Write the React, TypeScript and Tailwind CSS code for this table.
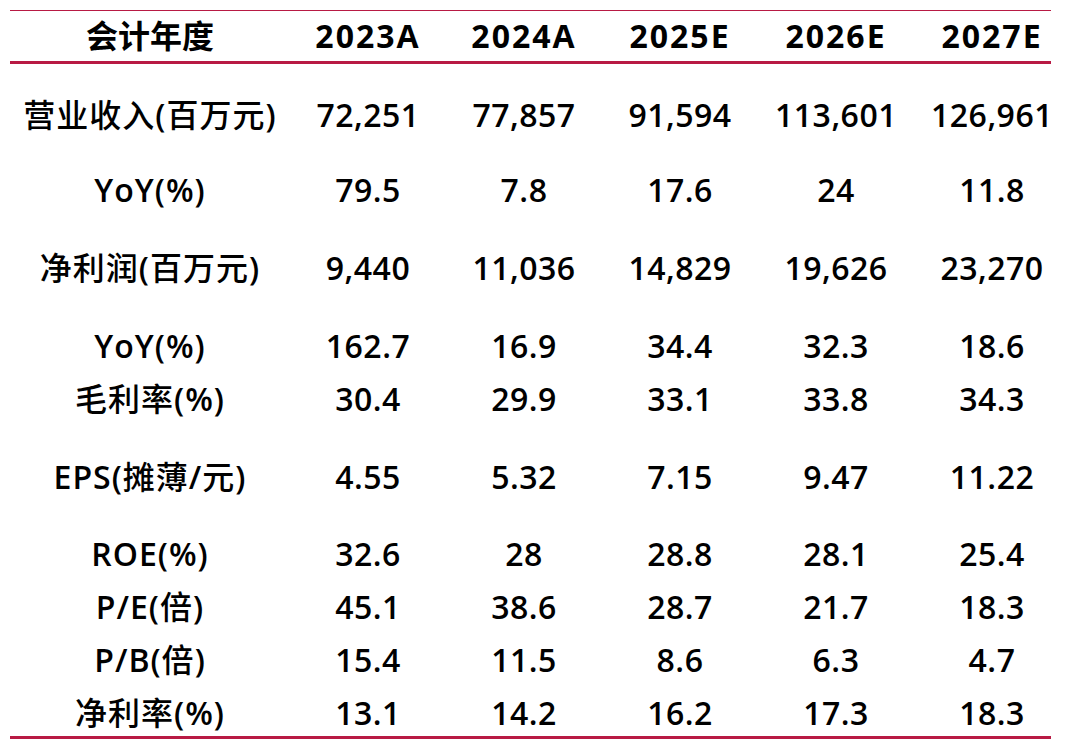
import React from "react";

const years = ["2023A", "2024A", "2025E", "2026E", "2027E"];

const rows: { label: string; values: string[]; gap: string }[] = [
  { label: "营业收入(百万元)", values: ["72,251", "77,857", "91,594", "113,601", "126,961"], gap: "mt-[24px]" },
  { label: "YoY(%)", values: ["79.5", "7.8", "17.6", "24", "11.8"], gap: "mt-[22px]" },
  { label: "净利润(百万元)", values: ["9,440", "11,036", "14,829", "19,626", "23,270"], gap: "mt-[25px]" },
  { label: "YoY(%)", values: ["162.7", "16.9", "34.4", "32.3", "18.6"], gap: "mt-[25px]" },
  { label: "毛利率(%)", values: ["30.4", "29.9", "33.1", "33.8", "34.3"], gap: "mt-0" },
  { label: "EPS(摊薄/元)", values: ["4.55", "5.32", "7.15", "9.47", "11.22"], gap: "mt-[25px]" },
  { label: "ROE(%)", values: ["32.6", "28", "28.8", "28.1", "25.4"], gap: "mt-[24px]" },
  { label: "P/E(倍)", values: ["45.1", "38.6", "28.7", "21.7", "18.3"], gap: "mt-0" },
  { label: "P/B(倍)", values: ["15.4", "11.5", "8.6", "6.3", "4.7"], gap: "mt-0" },
  { label: "净利率(%)", values: ["13.1", "14.2", "16.2", "17.3", "18.3"], gap: "mt-0" },
];

const font = "font-['Open_Sans','Noto_Sans_CJK_SC',sans-serif]";

// CJK glyphs a touch lighter than the latin ones
const Label = ({ text }: { text: string }) => (
  <>
    {text.split(/([\u4e00-\u9fff]+)/).map((part, i) =>
      /[\u4e00-\u9fff]/.test(part) ? (
        <span key={i} className="font-medium">
          {part}
        </span>
      ) : (
        <span key={i}>{part}</span>
      )
    )}
  </>
);

export default function App() {
  return (
    <div className={`w-[1080px] h-[748px] bg-white overflow-hidden pt-[10px] pl-[10px] text-black ${font}`}>
      <div className="w-[1041px] h-px bg-[#b81a44]" />
      {/* Header */}
      <div className="grid grid-cols-[280px_repeat(5,156px)] h-[50px] items-center">
        <div className="text-center text-[32px] font-bold leading-none">会计年度</div>
        {years.map((y) => (
          <div key={y} className="text-center text-[32px] font-bold leading-none tracking-[2px]">
            {y}
          </div>
        ))}
      </div>
      <div className="w-[1041px] h-[3px] bg-[#b81a44]" />

      {/* Body */}
      {rows.map((r, i) => (
        <div
          key={i}
          className={`grid grid-cols-[280px_repeat(5,156px)] h-[53px] items-center ${r.gap}`}
        >
          <div className="text-center text-[32px] font-semibold leading-none whitespace-nowrap tracking-[1px]">
            <Label text={r.label} />
          </div>
          {r.values.map((v, j) => (
            <div key={j} className="text-center text-[32px] font-semibold leading-none tracking-[0.5px]">
              {v}
            </div>
          ))}
        </div>
      ))}
      <div className="w-[1041px] h-[3px] bg-[#b81a44] -mt-[3px]" />
    </div>
  );
}
